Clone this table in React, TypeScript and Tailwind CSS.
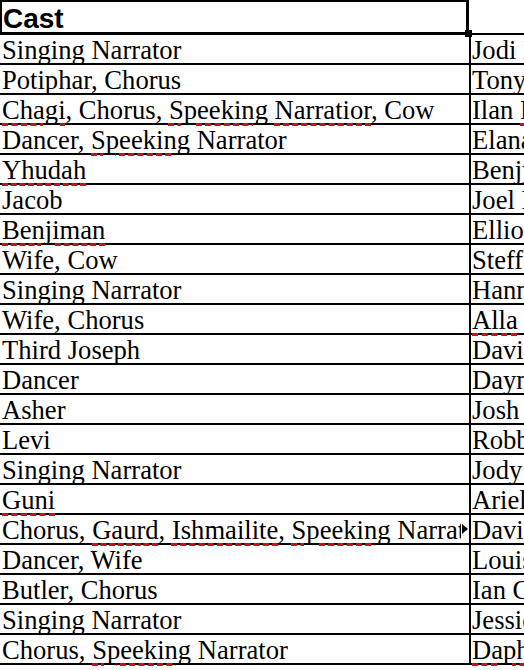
import React from "react";

// 役名（左列）。~ の付いた語はスペルチェックの赤い波線付き
const roles = [
  "Singing Narrator",
  "Potiphar, Chorus",
  "~Chagi, Chorus, ~Speeking ~Narratior, Cow",
  "Dancer, ~Speeking Narrator",
  "~Yhudah",
  "Jacob",
  "~Benjiman",
  "Wife, Cow",
  "Singing Narrator",
  "Wife, Chorus",
  "Third Joseph",
  "Dancer",
  "Asher",
  "Levi",
  "Singing Narrator",
  "~Guni",
  "Chorus, ~Gaurd, ~Ishmailite, ~Speeking Narrator",
  "Dancer, Wife",
  "Butler, Chorus",
  "Singing Narrator",
  "Chorus, ~Speeking Narrator",
];

// 出演者名（右列、画面右端で切れる）
const actors = [
  "Jodi Kessler",
  "Tony Marks",
  "Ilan ~Fishbein",
  "Elana Stern",
  "Benjy Roth",
  "Joel Lerner",
  "Elliot Cohen",
  "Steffi Gold",
  "Hannah Katz",
  "~Alla Berman",
  "David Levy",
  "Dayna Ross",
  "Josh Adler",
  "Robby Klein",
  "Jody Frank",
  "Ariel Stone",
  "David Shore",
  "Louise Hart",
  "Ian Green",
  "Jessica Blum",
  "~Daphna Weil",
];

function Marked({ text }: { text: string }) {
  const words = text.split(" ");
  return (
    <>
      {words.map((w, i) => {
        const sep = i < words.length - 1 ? " " : "";
        if (!w.startsWith("~")) return <span key={i}>{w + sep}</span>;
        const bare = w.slice(1);
        const m = bare.match(/^([A-Za-z]+)(.*)$/);
        const word = m ? m[1] : bare;
        const rest = m ? m[2] : "";
        return (
          <span key={i}>
            <span className="underline decoration-dashed decoration-[#c8101c] decoration-[2.5px] underline-offset-[4px]">
              {word}
            </span>
            {rest + sep}
          </span>
        );
      })}
    </>
  );
}

export default function App() {
  return (
    <div
      className="h-[670px] w-[524px] overflow-hidden bg-white text-black"
      style={{ fontFamily: '"Liberation Serif", "Times New Roman", serif' }}
    >
      {/* 見出し行 */}
      <div className="relative flex h-[35px]">
        <div className="h-[35px] w-[469px] shrink-0 border-[3px] border-t-2 border-l-2 border-black pl-px">
          <div
            className="text-[28px] font-bold leading-[34px]"
            style={{ fontFamily: '"Liberation Sans", Arial, sans-serif' }}
          >
            Cast
          </div>
        </div>
        <div className="min-w-0 flex-1 border-b-2 border-black" />
        {/* 選択ハンドル */}
        <div className="absolute left-[465px] top-[30px] h-[7px] w-[7px] bg-black" />
      </div>

      {/* データ行 */}
      {roles.map((role, i) => (
        <div key={i} className="flex h-[30px] border-b-2 border-black">
          {i === 16 ? (
            <div className="flex w-[469px] shrink-0 items-start">
              <div className="w-[461px] shrink-0 overflow-x-clip whitespace-nowrap pl-[2px] pt-px text-[26.6px] leading-[29px]">
                <Marked text={role} />
              </div>
              <div className="mt-[9px] ml-[1px] h-0 w-0 border-y-[5px] border-l-[6px] border-y-transparent border-l-black" />
            </div>
          ) : (
            <div className="w-[469px] shrink-0 overflow-x-clip whitespace-nowrap pl-[2px] pt-px text-[26.6px] leading-[29px]">
              <Marked text={role} />
            </div>
          )}
          <div className="min-w-0 flex-1 overflow-x-clip whitespace-nowrap border-l-2 border-black pl-px pt-px text-[26.6px] leading-[29px]">
            <Marked text={actors[i]} />
          </div>
        </div>
      ))}
    </div>
  );
}
